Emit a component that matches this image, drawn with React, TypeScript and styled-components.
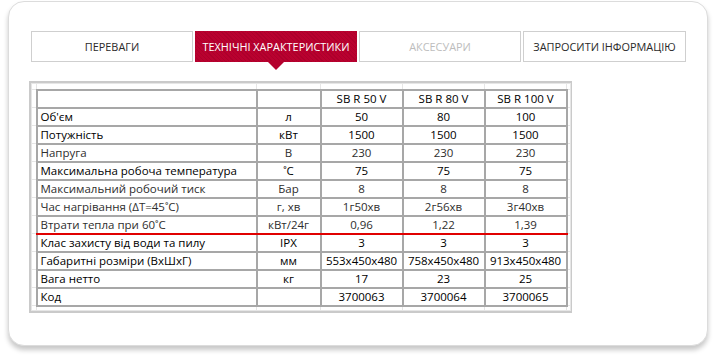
import React from "react";
import styled, { createGlobalStyle } from "styled-components";

const Global = createGlobalStyle`
  html, body { margin: 0; padding: 0; background: #fff; }
  body { font-family: "Open Sans", "Noto Sans", sans-serif; }
`;

const Page = styled.div`
  padding: 1px 9px 12px 8px;
`;

const Card = styled.div`
  width: 700px;
  box-sizing: border-box;
  border: 1px solid #dcdcdc;
  border-radius: 16px;
  background: #fff;
  box-shadow: 0 4px 5px rgba(0, 0, 0, 0.22);
  padding: 29px 20px 32px 20px;
`;

const Tabs = styled.div`
  display: grid;
  grid-template-columns: 162px 162px 162px 163px;
  column-gap: 2px;
  margin-left: 2px;
`;

const Tab = styled.div<{ $state?: "active" | "disabled" }>`
  position: relative;
  height: 31px;
  box-sizing: border-box;
  display: flex;
  align-items: center;
  justify-content: center;
  font-family: "Open Sans", sans-serif;
  font-size: 10.9px;
  text-transform: uppercase;
  border: 1px solid ${(p) => (p.$state === "active" ? "transparent" : "#cfcfcf")};
  color: ${(p) =>
    p.$state === "active" ? "#fff" : p.$state === "disabled" ? "#bdbdbd" : "#2a2a2a"};
  background: ${(p) =>
    p.$state === "active"
      ? "repeating-linear-gradient(45deg, #b9012f 0px, #b9012f 2px, #ad002b 2px, #ad002b 3px)"
      : "#fff"};
  ${(p) =>
    p.$state === "active" &&
    `
    &::after {
      content: "";
      position: absolute;
      left: 50%;
      bottom: -9px;
      margin-left: -9px;
      border-left: 9px solid transparent;
      border-right: 9px solid transparent;
      border-top: 9px solid #b4012e;
    }
  `}
`;

const Frame = styled.div`
  margin-top: 19px;
  width: 543px;
  box-sizing: border-box;
  border: 2px solid #cacaca;
  background: #fff;
`;

const Sheet = styled.table`
  border-collapse: collapse;
  table-layout: fixed;
  width: 539px;
  font-family: "Open Sans", "Noto Sans", sans-serif;
  font-size: 11.5px;
`;

const GhostRow = styled.tr<{ $h: number }>`
  height: ${(p) => p.$h}px;
`;

const Ghost = styled.td`
  border: 1px solid #e6e6e6;
  padding: 0;
`;

const Row = styled.tr<{ $soft?: boolean; $mark?: boolean }>`
  height: 18px;
  color: ${(p) => (p.$soft ? "#2e2e2e" : "#000")};
  & > td.cell {
    border-bottom-color: ${(p) => (p.$mark ? "#e00000" : "#a7a7a7")};
  }
`;

const Cell = styled.td<{ $left?: boolean }>`
  border: 2px solid #a7a7a7;
  padding: 0 ${(p) => (p.$left ? "0 0 3px" : "0")};
  text-align: ${(p) => (p.$left ? "left" : "center")};
  white-space: nowrap;
  line-height: 14px;
  overflow: hidden;
`;

type R = { name: string; unit: string; v: string[]; soft?: boolean; mark?: boolean };

const rows: R[] = [
  { name: "", unit: "", v: ["SB R 50 V", "SB R 80 V", "SB R 100 V"] },
  { name: "Об'єм", unit: "л", v: ["50", "80", "100"] },
  { name: "Потужність", unit: "кВт", v: ["1500", "1500", "1500"] },
  { name: "Напруга", unit: "В", v: ["230", "230", "230"], soft: true },
  { name: "Максимальна робоча температура", unit: "˚C", v: ["75", "75", "75"] },
  { name: "Максимальний робочий тиск", unit: "Бар", v: ["8", "8", "8"], soft: true },
  { name: "Час нагрівання (ΔT=45˚C)", unit: "г, хв", v: ["1г50хв", "2г56хв", "3г40хв"], soft: true },
  { name: "Втрати тепла при 60˚C", unit: "кВт/24г", v: ["0,96", "1,22", "1,39"], soft: true, mark: true },
  { name: "Клас захисту від води та пилу", unit: "IPX", v: ["3", "3", "3"] },
  { name: "Габаритні розміри (ВхШхГ)", unit: "мм", v: ["553x450x480", "758x450x480", "913x450x480"] },
  { name: "Вага нетто", unit: "кг", v: ["17", "23", "25"] },
  { name: "Код", unit: "", v: ["3700063", "3700064", "3700065"] },
];

const widths = [5, 220, 64, 82, 82, 82, 4];

export default function App() {
  return (
    <>
      <Global />
      <Page>
        <Card>
          <Tabs>
            <Tab>Переваги</Tab>
            <Tab $state="active">Технічні характеристики</Tab>
            <Tab $state="disabled">Аксесуари</Tab>
            <Tab>Запросити інформацію</Tab>
          </Tabs>
          <Frame>
            <Sheet>
              <colgroup>
                {widths.map((w, i) => (
                  <col key={i} style={{ width: w }} />
                ))}
              </colgroup>
              <tbody>
                <GhostRow $h={6}>
                  {widths.map((_, i) => (
                    <Ghost key={i} />
                  ))}
                </GhostRow>
                {rows.map((r, i) => (
                  <Row key={i} $soft={r.soft} $mark={r.mark}>
                    <Ghost />
                    <Cell className="cell" $left>{r.name}</Cell>
                    <Cell className="cell">{r.unit}</Cell>
                    {r.v.map((x, j) => (
                      <Cell className="cell" key={j}>{x}</Cell>
                    ))}
                    <Ghost />
                  </Row>
                ))}
                <GhostRow $h={5}>
                  {widths.map((_, i) => (
                    <Ghost key={i} />
                  ))}
                </GhostRow>
              </tbody>
            </Sheet>
          </Frame>
        </Card>
      </Page>
    </>
  );
}
